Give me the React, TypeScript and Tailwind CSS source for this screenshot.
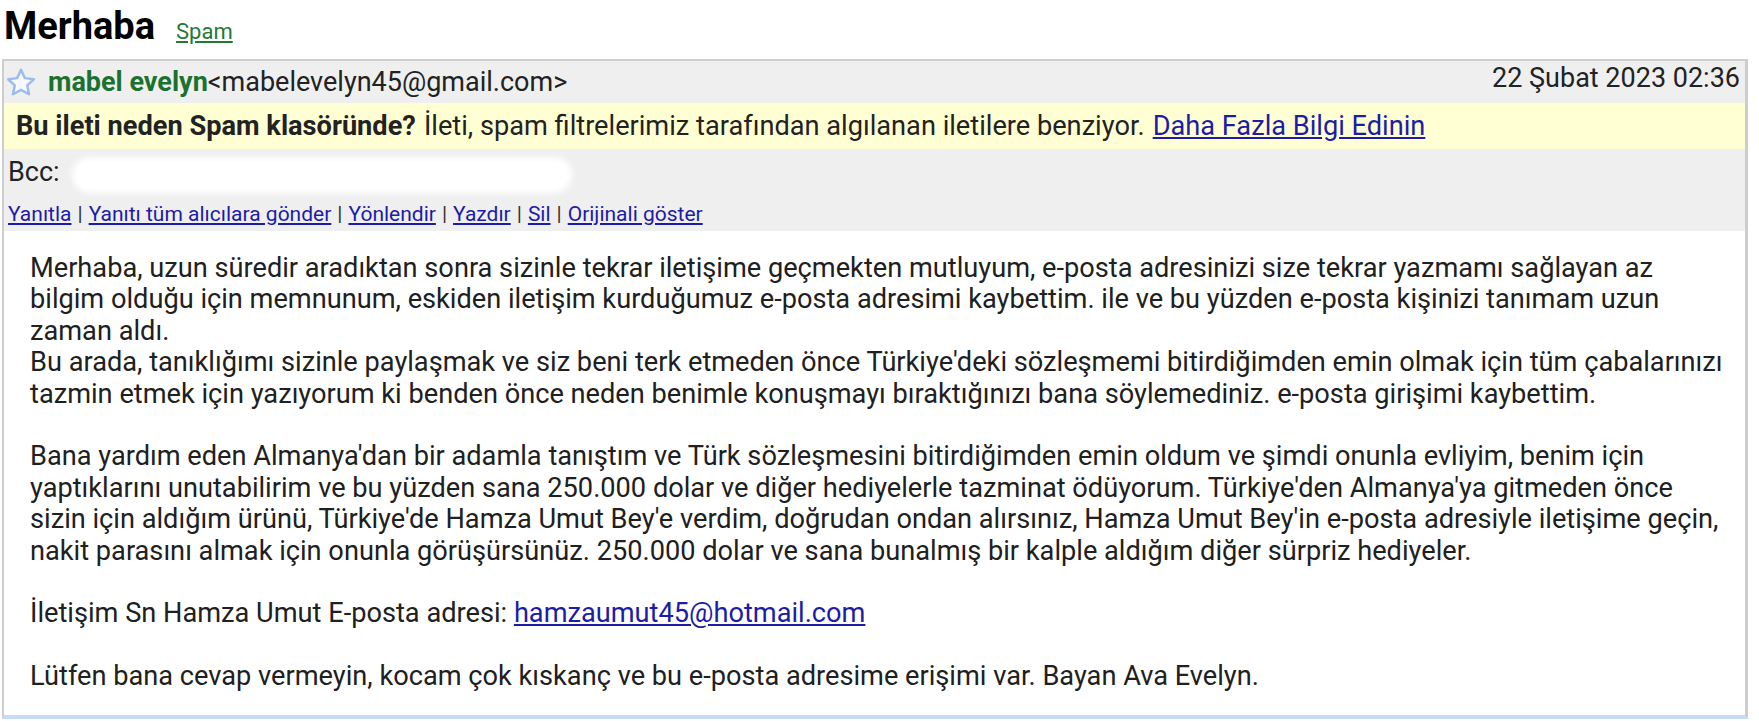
import React from "react";

const body: string[][] = [
  [
    "Merhaba, uzun süredir aradıktan sonra sizinle tekrar iletişime geçmekten mutluyum, e-posta adresinizi size tekrar yazmamı sağlayan az",
    "bilgim olduğu için memnunum, eskiden iletişim kurduğumuz e-posta adresimi kaybettim. ile ve bu yüzden e-posta kişinizi tanımam uzun",
    "zaman aldı.",
    "Bu arada, tanıklığımı sizinle paylaşmak ve siz beni terk etmeden önce Türkiye'deki sözleşmemi bitirdiğimden emin olmak için tüm çabalarınızı",
    "tazmin etmek için yazıyorum ki benden önce neden benimle konuşmayı bıraktığınızı bana söylemediniz. e-posta girişimi kaybettim.",
  ],
  [
    "Bana yardım eden Almanya'dan bir adamla tanıştım ve Türk sözleşmesini bitirdiğimden emin oldum ve şimdi onunla evliyim, benim için",
    "yaptıklarını unutabilirim ve bu yüzden sana 250.000 dolar ve diğer hediyelerle tazminat ödüyorum. Türkiye'den Almanya'ya gitmeden önce",
    "sizin için aldığım ürünü, Türkiye'de Hamza Umut Bey'e verdim, doğrudan ondan alırsınız, Hamza Umut Bey'in e-posta adresiyle iletişime geçin,",
    "nakit parasını almak için onunla görüşürsünüz. 250.000 dolar ve sana bunalmış bir kalple aldığım diğer sürpriz hediyeler.",
  ],
];

const actions = ["Yanıtla", "Yanıtı tüm alıcılara gönder", "Yönlendir", "Yazdır", "Sil", "Orijinali göster"];

// outlined star, Gmail classic style
function Star() {
  return (
    <svg width="30" height="29" viewBox="0 0 24 23" className="shrink-0">
      <path
        d="M12 1.4l3.1 6.6 7.2.9-5.3 4.9 1.4 7.1-6.4-3.5-6.4 3.5 1.4-7.1-5.3-4.9 7.2-.9z"
        fill="#f5f9ff"
        stroke="#9dbcec"
        strokeWidth="2"
        strokeLinejoin="round"
      />
    </svg>
  );
}

export default function App() {
  return (
    <div className="w-[1759px] h-[721px] overflow-hidden bg-white text-[#222] font-['Roboto','Liberation_Sans',sans-serif]">
      {/* Subject line */}
      <div className="h-[59px] pt-[4px] pl-[4px] flex items-baseline">
        <h1 className="text-[38px] leading-[44px] font-bold text-black">Merhaba</h1>
        <a href="#" className="ml-[21px] text-[22px] text-[#237a36] underline">Spam</a>
      </div>

      {/* Message box */}
      <div className="ml-[2px] w-[1746px] border-t-2 border-l-2 border-r-[3px] border-b-[4px] border-[#cdcdcd] border-b-[#c6dbf7]">
        <div className="h-[42px] bg-[#efefef] flex items-center justify-between pl-[2px] pr-[5px] text-[27px]">
          <div className="flex items-center">
            <Star />
            <span className="ml-[12px] font-bold text-[#1b722f]">mabel evelyn</span>
            <span>&lt;mabelevelyn45@gmail.com&gt;</span>
          </div>
          <span className="-mt-[8px]">22 Şubat 2023 02:36</span>
        </div>

        <div className="h-[46px] bg-[#ffffd3] flex items-center pl-[12px] text-[27.2px]">
          <span className="font-bold mr-[8px]">Bu ileti neden Spam klasöründe?</span>
          <span>İleti, spam filtrelerimiz tarafından algılanan iletilere benziyor.</span>
          <a href="#" className="ml-[8px] text-[#1c1ca8] underline">Daha Fazla Bilgi Edinin</a>
        </div>

        <div className="h-[46px] bg-[#efefef] flex items-center pl-[4px] text-[27px]">
          <span>Bcc:</span>
          <span className="ml-[12px] mt-[6px] inline-block w-[500px] h-[36px] rounded-full bg-white blur-[3px]" />
        </div>

        <div className="h-[36px] bg-[#efefef] flex items-start pt-[4px] pl-[4px] text-[21px]">
          {actions.map((a, i) => (
            <span key={a} className="flex">
              {i > 0 && <span className="mx-[6px] text-[#333]">|</span>}
              <a href="#" className="text-[#1c1ca8] underline">{a}</a>
            </span>
          ))}
        </div>

        <div className="pt-[22px] pb-[22px] pl-[26px] text-[27.2px] leading-[31.4px] text-[#202020]">
          {body.map((para, pi) => (
            <div key={pi}>
              {para.map((line, li) => (
                <div key={li}>{line}</div>
              ))}
              <br />
            </div>
          ))}
          <div>
            İletişim Sn Hamza Umut E-posta adresi:{" "}
            <a href="#" className="text-[#1c1ca8] underline">hamzaumut45@hotmail.com</a>
          </div>
          <br />
          <div>Lütfen bana cevap vermeyin, kocam çok kıskanç ve bu e-posta adresime erişimi var. Bayan Ava Evelyn.</div>
        </div>
      </div>
    </div>
  );
}
